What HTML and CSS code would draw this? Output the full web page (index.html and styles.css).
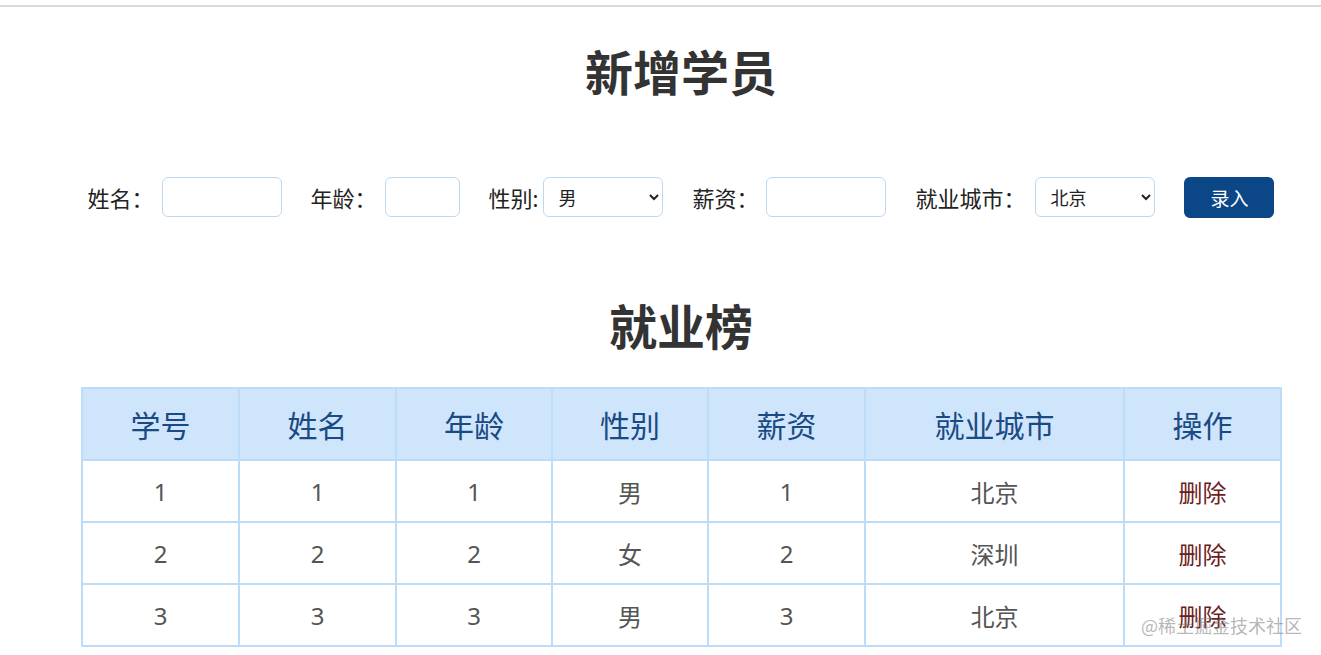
FILE: index.html
```html
<!DOCTYPE html>
<html lang="zh-CN">
<head>
  <meta charset="UTF-8">
  <meta name="viewport" content="width=device-width, initial-scale=1.0">
  <title>就业榜</title>
  <link rel="stylesheet" href="styles.css">
</head>
<body>

<div class="topbar"></div>

<div id="container">
  <h1 class="title">新增学员</h1>

  <div class="info">
    <label class="field">姓名：<input type="text" class="text w-name"></label>
    <label class="field">年龄：<input type="text" class="text w-age"></label>
    <label class="field">性别:<select class="pick">
        <option>男</option>
        <option>女</option>
      </select></label>
    <label class="field">薪资：<input type="text" class="text w-name"></label>
    <label class="field">就业城市：<select class="pick pick-city">
        <option>北京</option>
        <option>上海</option>
        <option>深圳</option>
      </select></label>
    <button class="add-btn">录入</button>
  </div>

  <h1 class="title title-list">就业榜</h1>

  <table id="list">
    <colgroup>
      <col class="c-157"><col class="c-157"><col class="c-156"><col class="c-156">
      <col class="c-157"><col class="c-city"><col class="c-157">
    </colgroup>
    <thead>
      <tr>
        <th>学号</th>
        <th>姓名</th>
        <th>年龄</th>
        <th>性别</th>
        <th>薪资</th>
        <th>就业城市</th>
        <th>操作</th>
      </tr>
    </thead>
    <tbody>
      <tr>
        <td>1</td><td>1</td><td>1</td><td>男</td><td>1</td><td>北京</td>
        <td><a href="javascript:;" class="del">删除</a></td>
      </tr>
      <tr>
        <td>2</td><td>2</td><td>2</td><td>女</td><td>2</td><td>深圳</td>
        <td><a href="javascript:;" class="del">删除</a></td>
      </tr>
      <tr>
        <td>3</td><td>3</td><td>3</td><td>男</td><td>3</td><td>北京</td>
        <td><a href="javascript:;" class="del">删除</a></td>
      </tr>
    </tbody>
  </table>
</div>

<div class="watermark">@稀土掘金技术社区</div>

</body>
</html>
```

FILE: styles.css
```css
* {
  box-sizing: border-box;
}
body {
  margin: 0;
  font-family: "Noto Sans", "Noto Sans CJK SC", sans-serif;
  color: #333;
  background-color: #fff;
}
.topbar {
  margin-top: 5px;
  height: 2px;
  background-color: #dadada;
}
#container {
  width: 1200px;
  margin-left: 81px;
}
.title {
  margin: 30px 0 0;
  height: 72px;
  line-height: 72px;
  font-size: 48px;
  font-weight: bold;
  text-align: center;
  color: #333;
}
.title-list {
  margin-top: 73px;
}
.info {
  display: flex;
  justify-content: center;
  align-items: center;
  margin-top: 67px;
  height: 42px;
}
.field {
  display: flex;
  align-items: center;
  font-size: 22px;
  color: #222;
  margin-right: 29px;
}
.text,
.pick {
  height: 40px;
  border: 1px solid #bcd9f1;
  border-radius: 6px;
  outline: none;
  background-color: #fff;
  margin-left: 8px;
}
.w-name {
  width: 120px;
}
.w-age {
  width: 75px;
}
.pick {
  width: 120px;
  padding: 0 6px 0 10px;
  font-size: 18px;
  font-family: "Noto Sans CJK SC", sans-serif;
  color: #222;
  margin-left: 5px;
}
.pick-city {
  margin-left: 10px;
}
.add-btn {
  width: 90px;
  height: 41px;
  border: none;
  border-radius: 6px;
  background-color: #0b4687;
  color: #fff;
  font-size: 19px;
  font-family: "Noto Sans CJK SC", sans-serif;
  cursor: pointer;
}
#list {
  width: 1199px;
  margin-top: 24px;
  border-collapse: collapse;
  table-layout: fixed;
  border: 2px solid #bddcf8;
}
.c-157 {
  width: 157px;
}
.c-156 {
  width: 156px;
}
.c-city {
  width: 259px;
}
#list th,
#list td {
  border: 2px solid #bddcf8;
  text-align: center;
}
#list th {
  height: 72px;
  background-color: #cfe5fc;
  color: #1a4a84;
  font-size: 30px;
  font-weight: normal;
}
#list td {
  height: 62px;
  font-size: 24px;
  color: #555;
}
.del {
  color: #6d1d22;
  text-decoration: none;
}
.watermark {
  position: absolute;
  left: 1141px;
  top: 612px;
  font-size: 18px;
  color: rgba(120, 120, 120, 0.55);
  font-family: "Noto Sans CJK SC", sans-serif;
}
```
